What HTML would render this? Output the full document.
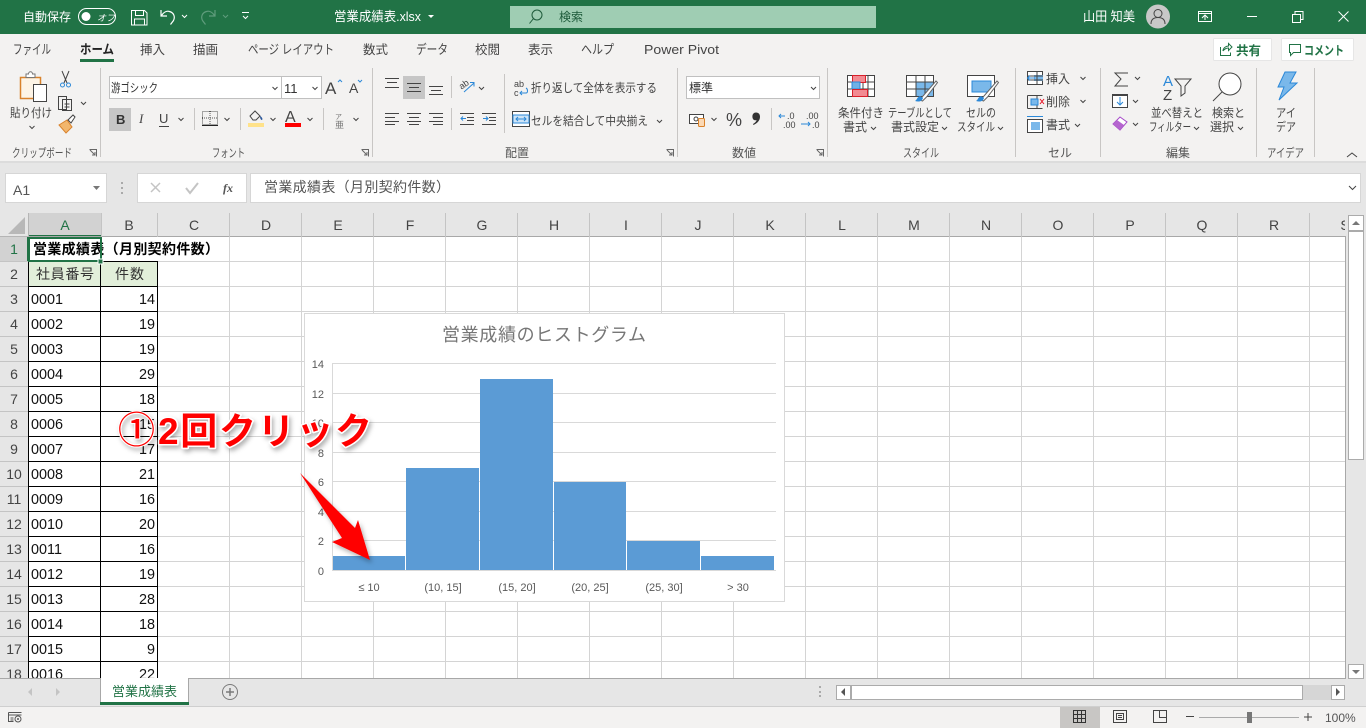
<!DOCTYPE html>
<html lang="ja"><head><meta charset="utf-8"><title>営業成績表.xlsx</title>
<style>
html,body{margin:0;padding:0;width:1366px;height:728px;overflow:hidden;background:#e6e6e6}
svg{display:block;font-family:"Liberation Sans","Noto Sans CJK JP",sans-serif}
.t{font-size:12px;fill:#444}
.g{font-size:12px;fill:#555}
.c{font:14.4px "Liberation Sans","Noto Sans CJK JP",sans-serif;fill:#111}
.h{font-size:14px;fill:#444;text-anchor:middle}
.k{font-size:11px;fill:#595959}
.n{fill:none;stroke:#444;stroke-width:1}
.ch{fill:none;stroke:#444;stroke-width:1}
</style></head><body>
<svg width="1366" height="728" viewBox="0 0 1366 728" xmlns="http://www.w3.org/2000/svg">
<defs>
<pattern id="gv" x="158" y="0" width="72" height="25" patternUnits="userSpaceOnUse"><rect x="71" width="1" height="25" fill="#d4d4d4"/></pattern>
<pattern id="gh" x="0" y="237" width="72" height="25" patternUnits="userSpaceOnUse"><rect y="24" width="72" height="1" fill="#d4d4d4"/></pattern>
<filter id="sh" x="-20%" y="-20%" width="140%" height="140%"><feDropShadow dx="2" dy="3" stdDeviation="2.5" flood-color="#000" flood-opacity=".3"/></filter>
<clipPath id="cp"><rect x="29" y="213" width="1316" height="465"/></clipPath>
</defs>

<!-- title bar -->
<rect width="1366" height="34" fill="#217346"/>
<text x="23" y="21" font-size="12" fill="#fff" textLength="48" lengthAdjust="spacingAndGlyphs">自動保存</text>
<rect x="78.500" y="8.500" width="37" height="16" rx="8" fill="none" stroke="#fff"/>
<circle cx="86" cy="16.500" r="4.500" fill="#fff"/>
<text x="97" y="21" font-size="9" fill="#fff" font-style="italic">オフ</text>
<path d="M131.500 10.500h13l2.500 2.500v12h-15.500zM135.500 10.500v5h8v-5M134.500 25v-6h10v6" fill="none" stroke="#fff"/>
<path d="M161 10v6h6M161.500 15.500c2-3 5-5 8-4 4 1 6 5 4 9l-3 4" fill="none" stroke="#fff" stroke-width="1.200"/>
<path d="M182 15l2.500 2.500 2.500-2.500" fill="none" stroke="#fff"/>
<path d="M215 10v6h-6M214.500 15.500c-2-3-5-5-8-4-4 1-6 5-4 9l3 4" fill="none" stroke="#5f9c7c" stroke-width="1.200"/>
<path d="M223 15l2.500 2.500 2.500-2.500" fill="none" stroke="#5f9c7c"/>
<path d="M242 12.500h7M243 16l2.500 2.500 2.500-2.500" fill="none" stroke="#fff"/>
<text x="334" y="21" font-size="13" fill="#fff" textLength="87" lengthAdjust="spacingAndGlyphs">営業成績表.xlsx</text>
<path d="M428 15h6l-3 3z" fill="#fff"/>
<rect x="510" y="6" width="366" height="22" fill="#9fcdb3"/>
<circle cx="537" cy="15" r="5" fill="none" stroke="#1d5a3a"/><path d="M533.500 18.500l-4 5" stroke="#1d5a3a" fill="none"/>
<text x="559" y="21" font-size="12" fill="#1d5a3a">検索</text>
<text x="1083" y="21" font-size="13" fill="#fff" textLength="52" lengthAdjust="spacingAndGlyphs">山田 知美</text>
<circle cx="1158" cy="16.500" r="12" fill="#c8c8c8"/>
<circle cx="1158" cy="13.500" r="4" fill="none" stroke="#444"/><path d="M1151 24c0-5 3-6.500 7-6.500s7 1.500 7 6.500" fill="none" stroke="#444"/>
<path d="M1198.500 11.500h13v10h-13zM1198.500 13.500h13M1202 18l3-3 3 3M1205 15v5" fill="none" stroke="#fff"/>
<rect x="1247" y="16" width="10" height="1" fill="#fff"/>
<path d="M1292.500 14.500h8v8h-8zM1295 14v-2.500h8v8h-2.500" fill="none" stroke="#fff"/>
<path d="M1338.500 11.500l10 10M1348.500 11.500l-10 10" fill="none" stroke="#fff"/>

<!-- ribbon -->
<rect y="34" width="1366" height="127" fill="#f3f2f1"/>
<rect y="161" width="1366" height="2" fill="#dcdcdc"/>
<g font-size="12.500" fill="#444">
<text x="13" y="54" font-size="13" textLength="38" lengthAdjust="spacingAndGlyphs">ファイル</text>
<text x="80" y="54" font-size="13" font-weight="700" fill="#222" textLength="34" lengthAdjust="spacingAndGlyphs">ホーム</text>
<text x="140" y="54">挿入</text>
<text x="193" y="54">描画</text>
<text x="248" y="54" font-size="13" textLength="86" lengthAdjust="spacingAndGlyphs">ページ レイアウト</text>
<text x="363" y="54">数式</text>
<text x="416" y="54" font-size="13" textLength="32" lengthAdjust="spacingAndGlyphs">データ</text>
<text x="475" y="54">校閲</text>
<text x="528" y="54">表示</text>
<text x="581" y="54" font-size="13" textLength="33" lengthAdjust="spacingAndGlyphs">ヘルプ</text>
<text x="644" y="54" font-size="13" textLength="75" lengthAdjust="spacingAndGlyphs">Power Pivot</text>
</g>
<rect x="80" y="59" width="34" height="3" fill="#217346"/>
<rect x="1213.500" y="38.500" width="58" height="22" rx="1" fill="#fff" stroke="#e6e6e6"/>
<path d="M1220.500 47v8.500h10v-3M1223 51c0-3 3-5 5.500-5v-2.500l3.500 3.500-3.500 3.500V48c-2 0-4 1-5.500 3" fill="none" stroke="#217346"/>
<text x="1236" y="55" font-size="12.500" font-weight="700" fill="#217346">共有</text>
<rect x="1281.500" y="38.500" width="72" height="22" rx="1" fill="#fff" stroke="#e6e6e6"/>
<path d="M1289.500 44.500h11v8h-7l-3 3v-3h-1z" fill="none" stroke="#217346"/>
<text x="1304" y="55" font-size="12.500" font-weight="700" fill="#217346" textLength="40" lengthAdjust="spacingAndGlyphs">コメント</text>

<!-- separators -->
<g fill="#c8c6c4">
<rect x="100" y="68" width="1" height="89"/><rect x="372" y="68" width="1" height="89"/><rect x="677" y="68" width="1" height="89"/><rect x="827" y="68" width="1" height="89"/><rect x="1015" y="68" width="1" height="89"/><rect x="1100" y="68" width="1" height="89"/><rect x="1256" y="68" width="1" height="89"/><rect x="1314" y="68" width="1" height="89"/>
<rect x="194" y="108" width="1" height="22"/><rect x="240" y="108" width="1" height="22"/><rect x="323" y="108" width="1" height="22"/>
<rect x="451" y="76" width="1" height="22"/><rect x="451" y="108" width="1" height="22"/><rect x="504" y="74" width="1" height="59"/><rect x="771" y="108" width="1" height="22"/>
</g>

<!-- clipboard -->
<path d="M20.500 77.500h20v21h-20z" fill="#fdf4e6" stroke="#d9822b" stroke-width="1.500"/>
<path d="M26 77v-3h2.500c0-3 4-3 4 0H35v3.500h-9z" fill="#fff" stroke="#777"/>
<rect x="33.500" y="84.500" width="13" height="17" fill="#fff" stroke="#444"/>
<text x="10" y="117" class="t" textLength="42" lengthAdjust="spacingAndGlyphs">貼り付け</text>
<path d="M29.500 126l2.500 2.500 2.500-2.500" class="ch"/>
<path d="M62 71l5 12M69 71l-5 12" stroke="#444" fill="none"/><circle cx="62.500" cy="85" r="2" fill="none" stroke="#2b88d8"/><circle cx="68.500" cy="85" r="2" fill="none" stroke="#2b88d8"/>
<path d="M58.500 96.500h8v13h-8zM62.500 99.500h9v11h-9z" fill="#f3f2f1" stroke="#444"/><path d="M64.500 104h5M64.500 107h5" stroke="#444"/>
<path d="M81 102l2.500 2.500 2.500-2.500" class="ch"/>
<path d="M59 125l8-5 5 7-6 6z" fill="#f2b66d" stroke="#d9822b"/><path d="M68 120l5-5 2 2-4 6z" fill="#fff" stroke="#444"/>
<text x="12" y="157" class="g" textLength="60" lengthAdjust="spacingAndGlyphs">クリップボード</text>
<path d="M89.500 149.500h7v7M90 150l5 5M95 152v3h-3" fill="none" stroke="#666"/>

<!-- font -->
<rect x="109.500" y="76.500" width="172" height="22" fill="#fff" stroke="#c0c0c0"/>
<rect x="281.500" y="76.500" width="40" height="22" fill="#fff" stroke="#c0c0c0"/>
<text x="111" y="92" font-size="12" fill="#333" textLength="47" lengthAdjust="spacingAndGlyphs">游ゴシック</text>
<path d="M272.500 87l2.500 2.500 2.500-2.500M312.500 87l2.500 2.500 2.500-2.500" class="ch"/>
<text x="284" y="93" font-size="13" fill="#333">11</text>
<text x="325" y="94" font-size="17" fill="#444">A</text><path d="M338 82l2-2 2 2" fill="none" stroke="#2b88d8"/>
<text x="349" y="93" font-size="14" fill="#444">A</text><path d="M358 80l2 2 2-2" fill="none" stroke="#2b88d8"/>
<rect x="109" y="108" width="22" height="23" fill="#c6c6c6"/>
<text x="116" y="124" font-size="13" font-weight="700" fill="#333">B</text>
<text x="139" y="123" font-size="13" font-style="italic" fill="#444" font-family="Liberation Serif">I</text>
<text x="159" y="123" font-size="13" fill="#444">U</text><rect x="159" y="126" width="10" height="1" fill="#444"/>
<path d="M178.500 118l2.500 2.500 2.500-2.500M224.500 118l2.500 2.500 2.500-2.500M270.500 118l2.500 2.500 2.500-2.500M307.500 118l2.500 2.500 2.500-2.500M353.500 118l2.500 2.500 2.500-2.500" class="ch"/>
<path d="M202.500 111.500h15v13h-15zM210 111v13M202 118h16" fill="none" stroke="#555" stroke-dasharray="1 1"/><rect x="202" y="125" width="16" height="1" fill="#222"/>
<path d="M250 116l5-5 5 5-4 4h-3z" fill="none" stroke="#444"/><path d="M260 116c2 1 3 3 2 4-1 0-2-1-2-4z" fill="#2b579a"/>
<rect x="248" y="123" width="16" height="4" fill="#ffe28a"/>
<text x="285" y="122" font-size="16" fill="#444">A</text>
<rect x="285" y="123" width="16" height="4" fill="#f00"/>
<text x="335" y="119" font-size="7" fill="#777">ア</text><text x="335" y="128" font-size="9" fill="#777">亜</text>
<text x="212" y="157" class="g" textLength="33" lengthAdjust="spacingAndGlyphs">フォント</text>
<path d="M361.500 149.500h7v7M362 150l5 5M367 152v3h-3" fill="none" stroke="#666"/>

<!-- alignment -->
<rect x="403" y="76" width="22" height="23" fill="#c6c6c6"/>
<g fill="#444">
<rect x="385" y="78" width="14" height="1"/><rect x="387" y="82" width="10" height="1"/><rect x="385" y="87" width="14" height="1"/>
<rect x="407" y="83" width="14" height="1"/><rect x="409" y="87" width="10" height="1"/><rect x="407" y="91" width="14" height="1"/>
<rect x="429" y="86" width="14" height="1"/><rect x="431" y="90" width="10" height="1"/><rect x="429" y="94" width="14" height="1"/>
<rect x="385" y="113" width="14" height="1"/><rect x="385" y="117" width="10" height="1"/><rect x="385" y="121" width="14" height="1"/><rect x="385" y="124" width="10" height="1"/>
<rect x="407" y="113" width="14" height="1"/><rect x="409" y="117" width="10" height="1"/><rect x="407" y="121" width="14" height="1"/><rect x="409" y="124" width="10" height="1"/>
<rect x="429" y="113" width="14" height="1"/><rect x="433" y="117" width="10" height="1"/><rect x="429" y="121" width="14" height="1"/><rect x="433" y="124" width="10" height="1"/>
<rect x="460" y="113" width="14" height="1"/><rect x="467" y="117" width="7" height="1"/><rect x="467" y="120" width="7" height="1"/><rect x="460" y="124" width="14" height="1"/>
<rect x="482" y="113" width="14" height="1"/><rect x="489" y="117" width="7" height="1"/><rect x="489" y="120" width="7" height="1"/><rect x="482" y="124" width="14" height="1"/>
</g>
<path d="M466 118.500h-5M463 116.500l-2 2 2 2M483 118.500h5M486 116.500l2 2-2 2" fill="none" stroke="#2b88d8"/>
<text x="459" y="88" font-size="9" fill="#444" transform="rotate(-35 463 85)">ab</text><path d="M464 92l10-9M470 82.500h4v4" fill="none" stroke="#2b88d8"/>
<path d="M479 87l2.500 2.500 2.500-2.500M657 120l2.500 2.500 2.500-2.500" class="ch"/>
<text x="514" y="87" font-size="9" fill="#444">ab</text><text x="514" y="96" font-size="9" fill="#444">c</text><path d="M520 93h6c2 0 2-4 0-5M522 91l-2 2 2 2" fill="none" stroke="#2b88d8"/>
<text x="531" y="92" class="t" textLength="126" lengthAdjust="spacingAndGlyphs">折り返して全体を表示する</text>
<rect x="512.500" y="111.500" width="17" height="15" fill="#fff" stroke="#444"/><rect x="513" y="115" width="16" height="8" fill="#cde4f7" stroke="#2b88d8"/><path d="M516 119h10M518 117l-2 2 2 2M524 117l2 2-2 2" fill="none" stroke="#2b88d8"/>
<text x="531" y="125" class="t" textLength="117" lengthAdjust="spacingAndGlyphs">セルを結合して中央揃え</text>
<text x="505" y="157" class="g">配置</text>
<path d="M666.500 149.500h7v7M667 150l5 5M672 152v3h-3" fill="none" stroke="#666"/>

<!-- number -->
<rect x="686.500" y="76.500" width="133" height="22" fill="#fff" stroke="#c0c0c0"/>
<text x="689" y="92" font-size="12" fill="#333">標準</text>
<path d="M811 87l2.500 2.500 2.500-2.500M711.500 118l2.500 2.500 2.500-2.500" class="ch"/>
<rect x="689.500" y="114.500" width="14" height="9" fill="#fff" stroke="#444"/><circle cx="696" cy="119" r="2" fill="none" stroke="#444"/>
<rect x="698.500" y="118.500" width="6" height="8" rx="1" fill="#fbd9b5" stroke="#d9822b"/>
<text x="726" y="126" font-size="18" fill="#444">%</text>
<path d="M756 112.500c2.800 0 4 1.800 4 4.300 0 3.600-2.700 6.600-6.500 8.200l-.5-1c2-1.100 3.300-2.400 3.600-4-.4.200-.8.300-1.200.300-1.700 0-3-1.300-3-3.800 0-2.500 1.500-4 3.600-4z" fill="#333"/>
<text x="787" y="119" font-size="9" fill="#444">.0</text><text x="783" y="128" font-size="9" fill="#444">.00</text><path d="M779 116h6M781 114l-2 2 2 2" fill="none" stroke="#2b88d8"/>
<text x="806" y="119" font-size="9" fill="#444">.00</text><text x="812" y="128" font-size="9" fill="#444">.0</text><path d="M801 124h9M808 122l2 2-2 2" fill="none" stroke="#2b88d8"/>
<text x="732" y="157" class="g">数値</text>
<path d="M816.500 149.500h7v7M817 150l5 5M822 152v3h-3" fill="none" stroke="#666"/>

<!-- styles -->
<rect x="847.500" y="75.500" width="27" height="21" fill="#fff" stroke="#444"/>
<path d="M855 75v22M863 75v22M868 75v22M847 82h28M847 89h28" stroke="#444" fill="none"/>
<rect x="852.500" y="75.500" width="13" height="7" fill="#f28b92" stroke="#d9202a"/><rect x="852" y="82" width="8" height="7" fill="#6fb1e6" stroke="#2b88d8"/><rect x="852.500" y="89.500" width="15" height="7" fill="#f28b92" stroke="#d9202a"/>
<text x="838" y="117" class="t" textLength="46" lengthAdjust="spacingAndGlyphs">条件付き</text>
<text x="843" y="131" class="t">書式</text><path d="M871 127l2.500 2.500 2.500-2.500" class="ch"/>
<rect x="906.500" y="75.500" width="27" height="21" fill="#fff" stroke="#444"/><rect x="916" y="82" width="17" height="14" fill="#7ab8ea"/><path d="M906 82h28M906 89h28M916 75v22M925 75v22" stroke="#444" fill="none"/>
<path d="M920 100l3-4 13-15 1.500 1.500-11 14.500-4 4z" fill="#fff" stroke="#666"/><path d="M920 96c-3 1-3 4-5 5 3 1 7 1 8-3z" fill="#2b88d8"/>
<text x="888" y="117" class="t" textLength="64" lengthAdjust="spacingAndGlyphs">テーブルとして</text>
<text x="891" y="131" class="t" textLength="48" lengthAdjust="spacingAndGlyphs">書式設定</text><path d="M942 127l2.500 2.500 2.500-2.500" class="ch"/>
<rect x="967.500" y="75.500" width="27" height="21" fill="#fff" stroke="#444"/><rect x="972" y="81" width="19" height="11" fill="#7ab8ea" stroke="#2b88d8"/>
<path d="M981 100l3-4 13-15 1.500 1.500-11 14.500-4 4z" fill="#fff" stroke="#666"/><path d="M981 96c-3 1-3 4-5 5 3 1 7 1 8-3z" fill="#2b88d8"/>
<text x="966" y="117" class="t" textLength="30" lengthAdjust="spacingAndGlyphs">セルの</text>
<text x="957" y="131" class="t" textLength="38" lengthAdjust="spacingAndGlyphs">スタイル</text><path d="M998 127l2.500 2.500 2.500-2.500" class="ch"/>
<text x="903" y="157" class="g" textLength="36" lengthAdjust="spacingAndGlyphs">スタイル</text>

<!-- cells -->
<rect x="1027.500" y="71.500" width="15" height="13" fill="#fff" stroke="#444"/><rect x="1034" y="75" width="9" height="6" fill="#7ab8ea"/><path d="M1027 76h16M1027 80h16M1037 71v14" stroke="#444" fill="none"/><path d="M1028 78h7M1030 75.500l-2.500 2.500 2.500 2.500" stroke="#2b88d8" fill="#f3f2f1"/>
<text x="1046" y="83" class="t">挿入</text>
<path d="M1027.500 95.500h15M1027.500 108.500h15M1027.500 95.500v13M1037 95v14" stroke="#444" fill="none"/><rect x="1031" y="99" width="7" height="6" fill="#7ab8ea" stroke="#2b88d8"/><path d="M1040 99l4 5M1044 99l-4 5" stroke="#e81123"/>
<text x="1046" y="106" class="t">削除</text>
<rect x="1027.500" y="119.500" width="15" height="13" fill="#fff" stroke="#444"/><rect x="1031" y="122" width="9" height="8" fill="#7ab8ea"/><path d="M1027 116.500h16" stroke="#2b88d8"/>
<text x="1046" y="129" class="t">書式</text>
<path d="M1080.500 77l2.500 2.500 2.500-2.500M1080.500 100l2.500 2.500 2.500-2.500M1075 124l2.500 2.500 2.500-2.500" class="ch"/>
<text x="1048" y="157" class="g">セル</text>

<!-- editing -->
<path d="M1128 73h-13l6 6-6 7h13" fill="none" stroke="#444"/>
<path d="M1135 77l2.500 2.500 2.500-2.500M1133 100l2.500 2.500 2.500-2.500M1133 123l2.500 2.500 2.500-2.500" class="ch"/>
<rect x="1112.500" y="94.500" width="15" height="13" fill="#fff" stroke="#444"/><path d="M1120 97v8M1117 102l3 3 3-3" fill="none" stroke="#2b88d8"/><rect x="1112" y="94" width="16" height="2" fill="#444"/>
<path d="M1113 124l7-7 7 5-7 8z" fill="#fff" stroke="#a64ac9"/><path d="M1113 124l4-4 7 5-4 5z" fill="#b565cf"/>
<text x="1163" y="86" font-size="15" fill="#2b88d8">A</text><text x="1163" y="100" font-size="15" fill="#444">Z</text>
<path d="M1175 79h16l-6 7v7l-4 3v-10z" fill="none" stroke="#444"/>
<text x="1151" y="117" class="t" textLength="52" lengthAdjust="spacingAndGlyphs">並べ替えと</text>
<text x="1149" y="131" class="t" textLength="42" lengthAdjust="spacingAndGlyphs">フィルター</text><path d="M1194 127l2.500 2.500 2.500-2.500" class="ch"/>
<circle cx="1230" cy="84" r="11" fill="#fff" stroke="#444"/><path d="M1222 92l-9 9" stroke="#444" fill="none"/>
<text x="1212" y="117" class="t" textLength="33" lengthAdjust="spacingAndGlyphs">検索と</text>
<text x="1210" y="131" class="t">選択</text><path d="M1238 127l2.500 2.500 2.500-2.500" class="ch"/>
<text x="1166" y="157" class="g">編集</text>

<!-- ideas -->
<path d="M1285 72h11l-6 11h7l-18 17 5-13h-6z" fill="#7ab8ea" stroke="#2b88d8"/>
<text x="1276" y="117" class="t" textLength="20" lengthAdjust="spacingAndGlyphs">アイ</text>
<text x="1276" y="131" class="t" textLength="20" lengthAdjust="spacingAndGlyphs">デア</text>
<text x="1267" y="157" class="g" textLength="37" lengthAdjust="spacingAndGlyphs">アイデア</text>
<path d="M1347 157l5-4 5 4" fill="none" stroke="#444"/>

<!-- formula bar -->
<rect x="5.500" y="173.500" width="101" height="29" fill="#fff" stroke="#d6d6d6"/>
<text x="13" y="195" font-size="14" fill="#555">A1</text>
<path d="M93 186h7l-3.500 4z" fill="#777"/>
<g fill="#aaa"><rect x="121" y="182" width="2" height="2"/><rect x="121" y="187" width="2" height="2"/><rect x="121" y="192" width="2" height="2"/></g>
<rect x="137.500" y="173.500" width="109" height="29" fill="#fff" stroke="#d6d6d6"/>
<path d="M151 183l9 9M160 183l-9 9" stroke="#c4c4c4" stroke-width="1.500" fill="none"/>
<path d="M186 188l4 5 8-10" stroke="#c4c4c4" stroke-width="2" fill="none"/>
<text x="223" y="192" font-size="12" font-style="italic" font-weight="700" fill="#555" font-family="Liberation Serif">fx</text>
<rect x="250.500" y="173.500" width="1110" height="29" fill="#fff" stroke="#d6d6d6"/>
<text x="264" y="192" font-size="14" fill="#555" textLength="186">営業成績表（月別契約件数）</text>
<path d="M1349 186l3.500 3.500 3.500-3.500" class="ch"/>

<!-- sheet -->
<rect x="0" y="213" width="1366" height="465" fill="#e6e6e6"/>
<rect x="29" y="237" width="1316" height="441" fill="#fff"/>
<rect x="158" y="237" width="1187" height="441" fill="url(#gv)"/>
<rect x="158" y="237" width="1187" height="441" fill="url(#gh)"/>
<rect x="29" y="261" width="129" height="1" fill="#d4d4d4"/>
<!-- headers -->
<path d="M25 217v17h-17z" fill="#b8b8b8"/>
<rect x="29" y="213" width="72" height="24" fill="#d2d2d2"/>
<rect x="29" y="235" width="72" height="2" fill="#217346"/>
<rect x="0" y="237" width="28" height="25" fill="#d2d2d2"/>
<rect x="27" y="237" width="2" height="25" fill="#217346"/>
<rect x="0" y="236" width="28" height="1" fill="#b5b5b5"/>
<rect x="28" y="213" width="1" height="24" fill="#b5b5b5"/>
<rect x="29" y="236" width="1316" height="1" fill="#a8a8a8"/>
<rect x="1345" y="236" width="1" height="442" fill="#a8a8a8"/>
<g fill="#c4c4c4">
<rect x="101" y="213" width="1" height="24"/><rect x="157" y="213" width="1" height="24"/><rect x="229" y="213" width="1" height="24"/><rect x="301" y="213" width="1" height="24"/><rect x="373" y="213" width="1" height="24"/><rect x="445" y="213" width="1" height="24"/><rect x="517" y="213" width="1" height="24"/><rect x="589" y="213" width="1" height="24"/><rect x="661" y="213" width="1" height="24"/><rect x="733" y="213" width="1" height="24"/><rect x="805" y="213" width="1" height="24"/><rect x="877" y="213" width="1" height="24"/><rect x="949" y="213" width="1" height="24"/><rect x="1021" y="213" width="1" height="24"/><rect x="1093" y="213" width="1" height="24"/><rect x="1165" y="213" width="1" height="24"/><rect x="1237" y="213" width="1" height="24"/><rect x="1309" y="213" width="1" height="24"/>
<rect x="0" y="261" width="28" height="1"/><rect x="0" y="286" width="28" height="1"/><rect x="0" y="311" width="28" height="1"/><rect x="0" y="336" width="28" height="1"/><rect x="0" y="361" width="28" height="1"/><rect x="0" y="386" width="28" height="1"/><rect x="0" y="411" width="28" height="1"/><rect x="0" y="436" width="28" height="1"/><rect x="0" y="461" width="28" height="1"/><rect x="0" y="486" width="28" height="1"/><rect x="0" y="511" width="28" height="1"/><rect x="0" y="536" width="28" height="1"/><rect x="0" y="561" width="28" height="1"/><rect x="0" y="586" width="28" height="1"/><rect x="0" y="611" width="28" height="1"/><rect x="0" y="636" width="28" height="1"/><rect x="0" y="661" width="28" height="1"/>
</g>
<g clip-path="url(#cp)" class="h">
<text class="h" x="65" y="230" fill="#217346" style="fill:#217346">A</text><text class="h" x="129" y="230">B</text><text class="h" x="194" y="230">C</text><text class="h" x="266" y="230">D</text><text class="h" x="338" y="230">E</text><text class="h" x="410" y="230">F</text><text class="h" x="482" y="230">G</text><text class="h" x="554" y="230">H</text><text class="h" x="626" y="230">I</text><text class="h" x="698" y="230">J</text><text class="h" x="770" y="230">K</text><text class="h" x="842" y="230">L</text><text class="h" x="914" y="230">M</text><text class="h" x="986" y="230">N</text><text class="h" x="1058" y="230">O</text><text class="h" x="1130" y="230">P</text><text class="h" x="1202" y="230">Q</text><text class="h" x="1274" y="230">R</text><text class="h" x="1345" y="230">S</text>
</g>
<g>
<text class="h" x="14" y="254" style="fill:#217346">1</text><text class="h" x="14" y="279">2</text><text class="h" x="14" y="304">3</text><text class="h" x="14" y="329">4</text><text class="h" x="14" y="354">5</text><text class="h" x="14" y="379">6</text><text class="h" x="14" y="404">7</text><text class="h" x="14" y="429">8</text><text class="h" x="14" y="454">9</text><text class="h" x="14" y="479">10</text><text class="h" x="14" y="504">11</text><text class="h" x="14" y="529">12</text><text class="h" x="14" y="554">13</text><text class="h" x="14" y="579">14</text><text class="h" x="14" y="604">15</text><text class="h" x="14" y="629">16</text><text class="h" x="14" y="654">17</text><text class="h" x="14" y="679">18</text>
</g>
<!-- table -->
<rect x="29" y="262" width="129" height="24" fill="#e2efda"/>
<g fill="#000">
<rect x="28" y="262" width="1" height="416"/><rect x="100" y="262" width="1" height="416"/><rect x="157" y="262" width="1" height="416"/>
<rect x="28" y="286" width="130" height="1"/><rect x="28" y="311" width="130" height="1"/><rect x="28" y="336" width="130" height="1"/><rect x="28" y="361" width="130" height="1"/><rect x="28" y="386" width="130" height="1"/><rect x="28" y="411" width="130" height="1"/><rect x="28" y="436" width="130" height="1"/><rect x="28" y="461" width="130" height="1"/><rect x="28" y="486" width="130" height="1"/><rect x="28" y="511" width="130" height="1"/><rect x="28" y="536" width="130" height="1"/><rect x="28" y="561" width="130" height="1"/><rect x="28" y="586" width="130" height="1"/><rect x="28" y="611" width="130" height="1"/><rect x="28" y="636" width="130" height="1"/><rect x="28" y="661" width="130" height="1"/>
<rect x="100" y="261" width="58" height="1"/>
</g>
<text x="33" y="254" font-size="14" font-weight="700" fill="#000" textLength="186">営業成績表（月別契約件数）</text>
<rect x="28" y="237" width="74" height="2" fill="#217346"/><rect x="28" y="260" width="74" height="2" fill="#217346"/><rect x="28" y="237" width="2" height="25" fill="#217346"/><rect x="100" y="237" width="2" height="25" fill="#217346"/>
<rect x="98" y="259" width="5" height="5" fill="#217346" stroke="#fff"/>
<text x="36" y="279" font-size="14" fill="#333" textLength="58">社員番号</text>
<text x="115" y="279" font-size="14" fill="#333" textLength="29">件数</text>
<g class="c">
<text class="c" x="31" y="304">0001</text><text class="c" x="31" y="329">0002</text><text class="c" x="31" y="354">0003</text><text class="c" x="31" y="379">0004</text><text class="c" x="31" y="404">0005</text><text class="c" x="31" y="429">0006</text><text class="c" x="31" y="454">0007</text><text class="c" x="31" y="479">0008</text><text class="c" x="31" y="504">0009</text><text class="c" x="31" y="529">0010</text><text class="c" x="31" y="554">0011</text><text class="c" x="31" y="579">0012</text><text class="c" x="31" y="604">0013</text><text class="c" x="31" y="629">0014</text><text class="c" x="31" y="654">0015</text><text class="c" x="31" y="679">0016</text>
</g>
<g text-anchor="end">
<text class="c" x="155" y="304">14</text><text class="c" x="155" y="329">19</text><text class="c" x="155" y="354">19</text><text class="c" x="155" y="379">29</text><text class="c" x="155" y="404">18</text><text class="c" x="155" y="429">15</text><text class="c" x="155" y="454">17</text><text class="c" x="155" y="479">21</text><text class="c" x="155" y="504">16</text><text class="c" x="155" y="529">20</text><text class="c" x="155" y="554">16</text><text class="c" x="155" y="579">19</text><text class="c" x="155" y="604">28</text><text class="c" x="155" y="629">18</text><text class="c" x="155" y="654">9</text><text class="c" x="155" y="679">22</text>
</g>

<!-- chart -->
<rect x="304.500" y="313.500" width="480" height="288" fill="#fff" stroke="#d9d9d9"/>
<text x="442" y="341" font-size="18" fill="#767676" textLength="204">営業成績のヒストグラム</text>
<g fill="#d9d9d9">
<rect x="332" y="363" width="444" height="1"/><rect x="332" y="393" width="444" height="1"/><rect x="332" y="422" width="444" height="1"/><rect x="332" y="452" width="444" height="1"/><rect x="332" y="481" width="444" height="1"/><rect x="332" y="511" width="444" height="1"/><rect x="332" y="540" width="444" height="1"/><rect x="332" y="570" width="444" height="1"/><rect x="332" y="363" width="1" height="207"/>
</g>
<g fill="#5b9bd5">
<rect x="333" y="556" width="72" height="14"/><rect x="406" y="468" width="73" height="102"/><rect x="480" y="379" width="73" height="191"/><rect x="554" y="482" width="72" height="88"/><rect x="627" y="541" width="73" height="29"/><rect x="701" y="556" width="73" height="14"/>
</g>
<g class="k" text-anchor="end" fill="#595959">
<text class="k" x="324" y="368">14</text><text class="k" x="324" y="398">12</text><text class="k" x="324" y="427">10</text><text class="k" x="324" y="457">8</text><text class="k" x="324" y="486">6</text><text class="k" x="324" y="516">4</text><text class="k" x="324" y="545">2</text><text class="k" x="324" y="575">0</text>
</g>
<g text-anchor="middle">
<text class="k" x="369" y="591">≤ 10</text><text class="k" x="443" y="591">(10, 15]</text><text class="k" x="517" y="591">(15, 20]</text><text class="k" x="590" y="591">(20, 25]</text><text class="k" x="664" y="591">(25, 30]</text><text class="k" x="738" y="591">&gt; 30</text>
</g>

<!-- annotation -->
<g filter="url(#sh)">
<text x="118" y="443" font-size="37" font-weight="500" fill="#f00" stroke="#fff" stroke-width="2" paint-order="stroke" stroke-linejoin="round">①</text>
<text x="158" y="444" font-size="37" font-weight="700" fill="#f00" stroke="#fff" stroke-width="3" paint-order="stroke" stroke-linejoin="round" textLength="214">2回クリック</text>
</g>
<polygon points="300,473 355,528 358,520 370,560 332,542 342,538" fill="#f00" filter="url(#sh)"/>

<!-- vertical scrollbar -->
<rect x="1346" y="213" width="20" height="465" fill="#e6e6e6"/>
<rect x="1348.500" y="215.500" width="15" height="15" fill="#fff" stroke="#ababab"/>
<path d="M1352 225h8l-4-4z" fill="#777"/>
<rect x="1348.500" y="231.500" width="15" height="228" fill="#fff" stroke="#ababab"/>
<rect x="1348.500" y="664.500" width="15" height="14" fill="#fff" stroke="#ababab"/>
<path d="M1352 670h8l-4 4z" fill="#777"/>

<!-- tabs -->
<rect y="678" width="1346" height="1" fill="#a8a8a8"/>
<rect y="679" width="1366" height="27" fill="#e6e6e6"/>
<path d="M32 688v8l-4-4zM56 688v8l4-4z" fill="#c4c4c4"/>
<rect x="100" y="678" width="89" height="25" fill="#fff"/>
<rect x="100" y="678" width="1" height="25" fill="#a8a8a8"/><rect x="188" y="678" width="1" height="25" fill="#a8a8a8"/>
<rect x="100" y="702" width="89" height="3" fill="#217346"/>
<text x="112" y="696" font-size="13" fill="#217346">営業成績表</text>
<circle cx="230" cy="692" r="7.500" fill="none" stroke="#7a7a7a"/><path d="M226 692h8M230 688v8" stroke="#7a7a7a" stroke-width="1.500" fill="none"/>
<g fill="#aaa"><rect x="819" y="686" width="2" height="2"/><rect x="819" y="691" width="2" height="2"/><rect x="819" y="695" width="2" height="2"/></g>
<rect x="836.500" y="685.500" width="14" height="14" fill="#fff" stroke="#ababab"/><path d="M845 688v8l-4-4z" fill="#555"/>
<rect x="851.500" y="685.500" width="451" height="14" fill="#fff" stroke="#ababab"/>
<rect x="1303" y="685" width="28" height="15" fill="#d6d6d6"/>
<rect x="1331.500" y="685.500" width="13" height="14" fill="#fff" stroke="#ababab"/><path d="M1336 688v8l4-4z" fill="#555"/>

<!-- status bar -->
<rect y="706" width="1366" height="22" fill="#f3f2f1"/>
<rect y="706" width="1366" height="1" fill="#cfcfcf"/>
<path d="M8.500 712.500h13M8.500 712.500v9h5M8.500 715h13M10.500 718h3M10.500 720h3" fill="none" stroke="#555"/><circle cx="18" cy="719" r="3" fill="none" stroke="#555"/><circle cx="18" cy="719" r="1" fill="#555"/>
<rect x="1060" y="707" width="40" height="21" fill="#c8c6c4"/>
<path d="M1073.500 710.500h12v12h-12zM1077.500 710v13M1081.500 710v13M1073 714.500h13M1073 718.500h13" fill="none" stroke="#333"/>
<path d="M1113.500 710.500h13v12h-13zM1116.500 713.500h7v6h-7zM1118 715.500h4M1118 717.500h4" fill="none" stroke="#444"/>
<path d="M1153.500 710.500h13v12h-13zM1159.500 710v7.500h7" fill="none" stroke="#444"/>
<rect x="1186" y="716" width="8" height="1" fill="#444"/>
<rect x="1199" y="717" width="100" height="1" fill="#aaa"/>
<rect x="1247" y="712" width="5" height="11" fill="#777"/>
<path d="M1304 717h8M1308 713v8" fill="none" stroke="#444"/>
<text x="1325" y="722" font-size="12" fill="#555">100%</text>
</svg>
</body></html>
